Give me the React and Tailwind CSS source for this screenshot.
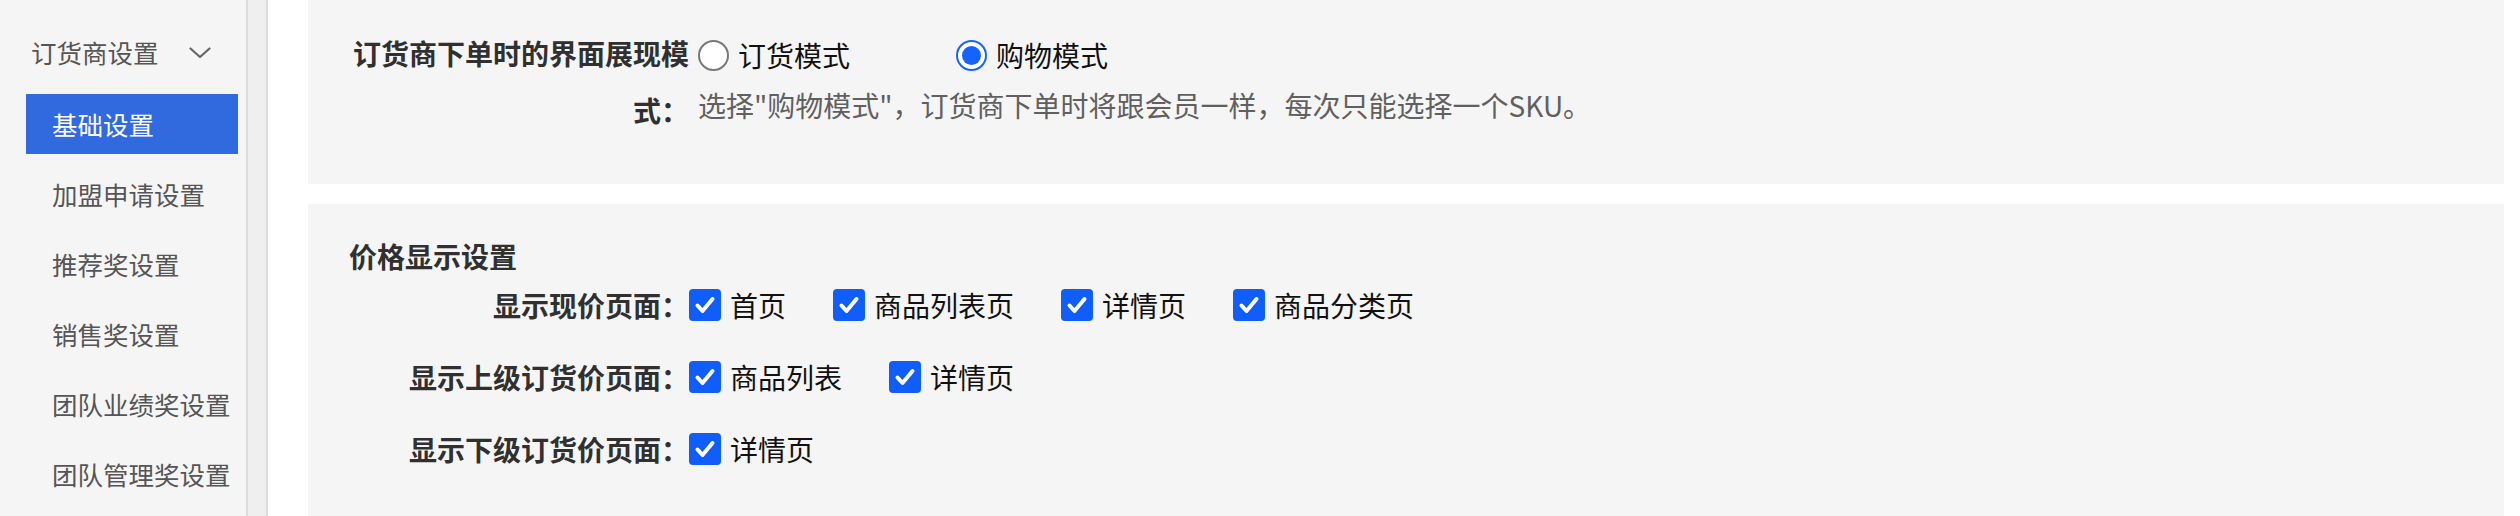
import { useState } from 'react';

const font = { fontFamily: '"Noto Sans CJK SC", "Noto Sans", sans-serif' };

const menuItems = ['基础设置', '加盟申请设置', '推荐奖设置', '销售奖设置', '团队业绩奖设置', '团队管理奖设置'];

const priceRows = [
  { label: '显示现价页面：', options: ['首页', '商品列表页', '详情页', '商品分类页'] },
  { label: '显示上级订货价页面：', options: ['商品列表', '详情页'] },
  { label: '显示下级订货价页面：', options: ['详情页'] },
];

function Sidebar() {
  return (
    <aside className="w-[246px] shrink-0 bg-[#f5f5f5] pt-[22px]">
      <div className="flex h-[60px] items-center pl-[31px] text-[25.5px] text-[#555]">
        <span>订货商设置</span>
        <svg className="ml-[30px] mt-[2px] h-[12px] w-[22px]" viewBox="0 0 22 12" fill="none">
          <path d="M1.5 1.5 L11 10 L20.5 1.5" stroke="#666" strokeWidth="2.2" strokeLinecap="round" strokeLinejoin="round" />
        </svg>
      </div>
      <ul className="mt-[12px] flex flex-col gap-[10px]">
        {menuItems.map((item, i) => (
          <li
            key={item}
            className={`ml-[26px] flex h-[60px] w-[212px] items-center pl-[26px] text-[25.5px] ${
              i === 0 ? 'bg-[#316ade] text-white' : 'text-[#555]'
            }`}
          >
            {item}
          </li>
        ))}
      </ul>
    </aside>
  );
}

function Radio({ checked, label, onClick, className }) {
  return (
    <button type="button" onClick={onClick} className={`flex items-center ${className || ''}`}>
      {checked ? (
        <span className="flex h-[31px] w-[31px] items-center justify-center rounded-full border-2 border-[#1463ff] bg-white">
          <span className="h-[19px] w-[19px] rounded-full bg-[#1463ff]" />
        </span>
      ) : (
        <span className="h-[31px] w-[31px] rounded-full border-2 border-[#777] bg-white" />
      )}
      <span className="ml-[9px] text-[28px] leading-none text-[#111]">{label}</span>
    </button>
  );
}

function Checkbox({ label }) {
  return (
    <span className="mr-[47px] flex items-center">
      <span className="flex h-[32px] w-[32px] items-center justify-center rounded-[4px] bg-[#0f5efc]">
        <svg className="h-[32px] w-[32px]" viewBox="0 0 32 32" fill="none">
          <path d="M8.5 16.5 L13.5 22 L23.5 10" stroke="white" strokeWidth="4" strokeLinecap="round" strokeLinejoin="round" />
        </svg>
      </span>
      <span className="ml-[9px] text-[28px] leading-none text-[#111]">{label}</span>
    </span>
  );
}

export default function App() {
  const [mode, setMode] = useState('shop');

  return (
    <div className="flex h-[516px] w-[2520px] overflow-hidden bg-white" style={font}>
      <Sidebar />
      <div className="w-[22px] shrink-0 border-x-2 border-[#dcdcdc] bg-[#efefef]" />
      <main className="ml-[40px] mr-[16px] flex flex-1 flex-col gap-[20px]">
        <section className="h-[184px] shrink-0 bg-[#f5f5f5] pl-[45px] pt-[25px]">
          <div className="flex">
            <div className="w-[336px] shrink-0 text-right text-[28px] font-bold leading-[57px] text-[#303030]">
              订货商下单时的界面展现模式：
            </div>
            <div className="ml-[9px] flex flex-col">
              <div className="flex h-[60px] items-center">
                <Radio label="订货模式" checked={mode === 'order'} onClick={() => setMode('order')} className="mr-[106px]" />
                <Radio label="购物模式" checked={mode === 'shop'} onClick={() => setMode('shop')} />
              </div>
              <p className="text-[28px] leading-[40px] text-[#606060]">
                选择"购物模式"，订货商下单时将跟会员一样，每次只能选择一个SKU。
              </p>
            </div>
          </div>
        </section>

        <section className="flex-1 bg-[#f5f5f5] pl-[45px] pt-[37px]">
          <h2 className="-ml-[4px] text-[28px] font-bold leading-[30px] text-[#303030]">价格显示设置</h2>
          <div className="-mt-[2px] flex flex-col">
            {priceRows.map((row) => (
              <div key={row.label} className="flex h-[72px] items-center">
                <div className="w-[336px] shrink-0 text-right text-[28px] font-bold leading-none text-[#303030]">
                  {row.label}
                </div>
                {row.options.map((opt) => (
                  <Checkbox key={opt} label={opt} />
                ))}
              </div>
            ))}
          </div>
        </section>
      </main>
    </div>
  );
}
